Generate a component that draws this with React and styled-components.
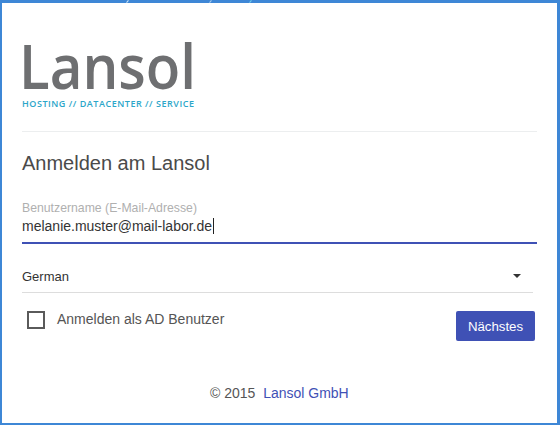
import React from "react";
import styled, { createGlobalStyle } from "styled-components";

const GlobalStyle = createGlobalStyle`
  html, body {
    margin: 0;
    padding: 0;
    background: #3e87d6;
    font-family: "Liberation Sans", Arial, sans-serif;
  }
`;

const Frame = styled.div`
  position: relative;
  box-sizing: border-box;
  width: 560px;
  height: 425px;
  padding: 3px 3px 2px 2px;
  background: #3e87d6;
  overflow: hidden;
`;

const Streak = styled.span`
  position: absolute;
  top: 0;
  left: ${(props) => props.left}px;
  width: 1px;
  height: 3px;
  background: ${(props) => props.color};
  transform: rotate(40deg);
`;

const Panel = styled.main`
  box-sizing: border-box;
  height: 100%;
  background: #fff;
  padding: 33px 0 0 20px;
  display: flex;
  flex-direction: column;
`;

const Logo = styled.svg`
  display: block;
  flex: none;
  width: 174px;
  height: 74px;
  overflow: visible;
`;

const LogoName = styled.text`
  font-family: "Open Sans", sans-serif;
  font-size: 62px;
  font-weight: 600;
  fill: #6e6f71;
`;

const LogoTagline = styled.text`
  font-family: "Open Sans", sans-serif;
  font-size: 9px;
  font-weight: 600;
  fill: #2ba6c9;
`;

const Divider = styled.hr`
  flex: none;
  width: 515px;
  height: 1px;
  margin: 21px 0 0;
  border: 0;
  background: #eceeef;
`;

const Heading = styled.h1`
  margin: 19px 0 0;
  font-size: 20px;
  line-height: 24px;
  font-weight: 400;
  color: #4a4a4a;
`;

const FieldLabel = styled.label`
  margin-top: 26px;
  font-size: 12.25px;
  line-height: 14px;
  color: #b0b0b0;
`;

const InputRow = styled.div`
  box-sizing: border-box;
  width: 515px;
  height: 29px;
  padding-top: 1px;
  border-bottom: 2px solid #3f51b5;
  font-size: 14px;
  line-height: 20px;
  color: #333;
`;

const Caret = styled.span`
  display: inline-block;
  width: 1px;
  height: 16px;
  margin-left: 1px;
  vertical-align: -3px;
  background: #222;
`;

const SelectRow = styled.div`
  box-sizing: border-box;
  width: 511px;
  height: 49px;
  padding: 25px 12px 0 0;
  display: flex;
  justify-content: space-between;
  align-items: flex-start;
  border-bottom: 1px solid #ddd;
  font-size: 13px;
  line-height: 16px;
  color: #333;
`;

const Arrow = styled.span`
  width: 0;
  height: 0;
  margin-top: 5px;
  border-left: 4px solid transparent;
  border-right: 4px solid transparent;
  border-top: 4px solid #333;
`;

const OptionsRow = styled.div`
  width: 513px;
  margin-top: 18px;
  display: flex;
  justify-content: space-between;
  align-items: flex-start;
`;

const CheckLabel = styled.label`
  display: flex;
  align-items: flex-start;
  gap: 12px;
  margin-left: 5px;
  font-size: 14px;
  line-height: 16px;
  color: #555;
`;

const CheckBox = styled.span`
  box-sizing: border-box;
  width: 18px;
  height: 18px;
  border: 2px solid #5a5a5a;
`;

const Button = styled.button`
  width: 79px;
  height: 30px;
  padding: 0;
  border: 0;
  border-radius: 2px;
  background: #3f51b5;
  color: #fff;
  font-family: inherit;
  font-size: 13.25px;
`;

const Footer = styled.footer`
  width: 515px;
  margin-top: 43px;
  padding-left: 188px;
  box-sizing: border-box;
  font-size: 14px;
  line-height: 18px;
  color: #555;
  white-space: pre;
`;

const FooterLink = styled.a`
  color: #3f51b5;
  text-decoration: none;
`;

export default function App() {
  return (
    <>
      <GlobalStyle />
      <Frame>
        <Streak left={127} color="#cfe6f7" />
        <Streak left={210} color="#a9cdef" />
        <Streak left={250} color="#6fd0ee" />
        <Panel>
          <Logo viewBox="0 0 174 74">
            <LogoName x="-3" y="53" textLength="177" lengthAdjust="spacingAndGlyphs">
              Lansol
            </LogoName>
            <LogoTagline x="0" y="71" textLength="172" lengthAdjust="spacing">
              HOSTING // DATACENTER // SERVICE
            </LogoTagline>
          </Logo>
          <Divider />
          <Heading>Anmelden am Lansol</Heading>
          <FieldLabel>Benutzername (E-Mail-Adresse)</FieldLabel>
          <InputRow>
            melanie.muster@mail-labor.de
            <Caret />
          </InputRow>
          <SelectRow>
            German
            <Arrow />
          </SelectRow>
          <OptionsRow>
            <CheckLabel>
              <CheckBox />
              Anmelden als AD Benutzer
            </CheckLabel>
            <Button>Nächstes</Button>
          </OptionsRow>
          <Footer>
            {"© 2015  "}
            <FooterLink href="#">Lansol GmbH</FooterLink>
          </Footer>
        </Panel>
      </Frame>
    </>
  );
}
